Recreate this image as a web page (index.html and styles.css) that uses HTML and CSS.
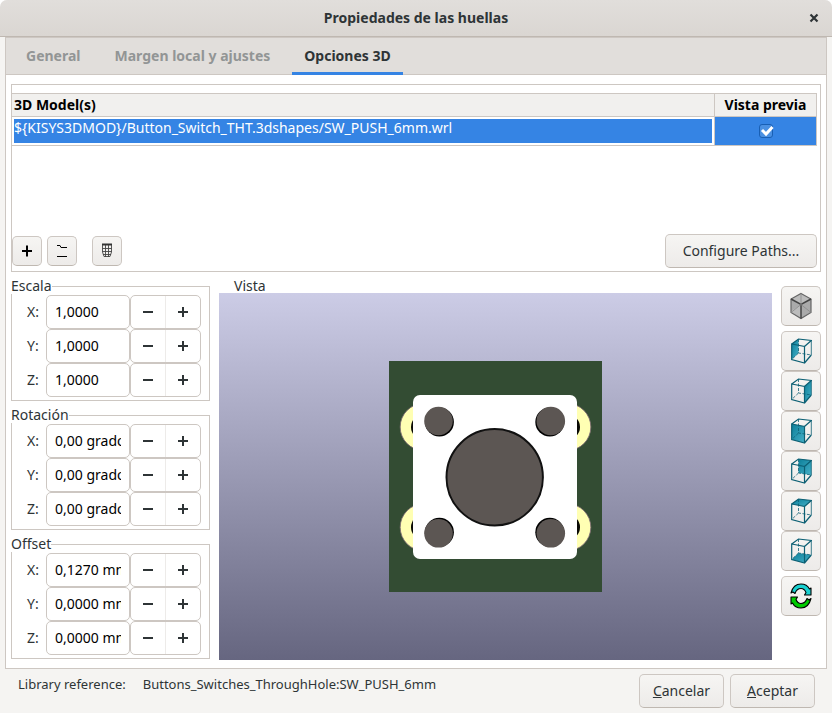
FILE: index.html
```html
<!DOCTYPE html>
<html lang="es">
<head>
<meta charset="utf-8">
<title>Propiedades de las huellas</title>
<link rel="stylesheet" href="styles.css">
</head>
<body>
<svg class="defs" aria-hidden="true">
  <defs>
    <linearGradient id="teal" x1="0" y1="0" x2="1" y2="1">
      <stop offset="0" stop-color="#0c7f99"/><stop offset="1" stop-color="#45b0c8"/>
    </linearGradient>
    <g id="wire" fill="none" stroke="#0b5f73">
      <path d="M.7 6 13.500 8.500V25L.7 21.500ZM.7 6 7.500 1 20.300 2.500 13.500 8.500M13.500 25 20.300 17" stroke-width="1.200"/>
      <path d="M20.300 2.500V17" stroke-width=".8"/>
      <path d="M7.500 1V15L20.300 17M7.500 15 .7 21.500" stroke-dasharray="3 1.500" stroke-width=".8"/>
    </g>
  </defs>
</svg>
<div class="window">
  <header class="titlebar">
    <h1>Propiedades de las huellas</h1>
    <button class="close" aria-label="Cerrar"><svg width="10" height="10" viewBox="0 0 10 10"><path d="M1.500 1.500 8.500 8.500M8.500 1.500 1.500 8.500" stroke="#2e3436" stroke-width="2.200"/></svg></button>
  </header>

  <main class="notebook">
    <nav class="tabs" role="tablist">
      <button class="tab" role="tab">General</button>
      <button class="tab" role="tab">Margen local y ajustes</button>
      <button class="tab active" role="tab" aria-selected="true">Opciones 3D</button>
    </nav>

    <div class="page">
      <section class="models">
        <table class="grid">
          <thead><tr><th>3D Model(s)</th><th class="preview">Vista previa</th></tr></thead>
          <tbody><tr>
            <td class="path"><div class="cell">${KISYS3DMOD}/Button_Switch_THT.3dshapes/SW_PUSH_6mm.wrl</div></td>
            <td class="preview"><label class="tick"><input type="checkbox" class="check" checked aria-label="Vista previa"><svg class="mark" width="14" height="12" viewBox="0 0 14 12"><path d="M2 5 6 9 12.500 2" fill="none" stroke="#fff" stroke-width="3"/></svg></label></td>
          </tr></tbody>
        </table>
        <div class="toolbar">
          <button class="btn tool" aria-label="Añadir modelo"><svg width="12" height="12" viewBox="0 0 12 12"><path d="M6 .500V11.500M1 6H11" stroke="#000" stroke-width="2"/></svg></button>
          <button class="btn tool" aria-label="Abrir carpeta"><svg width="12" height="14" viewBox="0 0 12 14"><path d="M1 1.500H4L5 3.500H11M1 12.500H11" fill="none" stroke="#000" stroke-width="1"/></svg></button>
          <button class="btn tool trash" aria-label="Eliminar modelo"><svg width="12" height="16" viewBox="0 0 12 16"><path d="M1 1.500H11" stroke="#333" stroke-width="2"/><path d="M1.500 2V9L3 13.500H9L10.500 9V2M4.500 2V14M7.500 2V14M1.500 5.500H10.500M1.500 8.500H10.500M2 11.500H10" fill="none" stroke="#444" stroke-width=".9"/></svg></button>
          <button class="btn text paths">Configure Paths...</button>
        </div>
      </section>

      <div class="columns">
        <div class="groups">
          <fieldset>
            <legend>Escala</legend>
            <div class="row"><label for="sx">X:</label><input id="sx" type="text" value="1,0000"><div class="spin"><button class="minus" aria-label="Menos"></button><button class="plus" aria-label="Más"></button></div></div>
            <div class="row"><label for="sy">Y:</label><input id="sy" type="text" value="1,0000"><div class="spin"><button class="minus" aria-label="Menos"></button><button class="plus" aria-label="Más"></button></div></div>
            <div class="row"><label for="sz">Z:</label><input id="sz" type="text" value="1,0000"><div class="spin"><button class="minus" aria-label="Menos"></button><button class="plus" aria-label="Más"></button></div></div>
          </fieldset>
          <fieldset>
            <legend>Rotación</legend>
            <div class="row"><label for="rx">X:</label><input id="rx" type="text" value="0,00 grados"><div class="spin"><button class="minus" aria-label="Menos"></button><button class="plus" aria-label="Más"></button></div></div>
            <div class="row"><label for="ry">Y:</label><input id="ry" type="text" value="0,00 grados"><div class="spin"><button class="minus" aria-label="Menos"></button><button class="plus" aria-label="Más"></button></div></div>
            <div class="row"><label for="rz">Z:</label><input id="rz" type="text" value="0,00 grados"><div class="spin"><button class="minus" aria-label="Menos"></button><button class="plus" aria-label="Más"></button></div></div>
          </fieldset>
          <fieldset>
            <legend>Offset</legend>
            <div class="row"><label for="ox">X:</label><input id="ox" type="text" value="0,1270 mm"><div class="spin"><button class="minus" aria-label="Menos"></button><button class="plus" aria-label="Más"></button></div></div>
            <div class="row"><label for="oy">Y:</label><input id="oy" type="text" value="0,0000 mm"><div class="spin"><button class="minus" aria-label="Menos"></button><button class="plus" aria-label="Más"></button></div></div>
            <div class="row"><label for="oz">Z:</label><input id="oz" type="text" value="0,0000 mm"><div class="spin"><button class="minus" aria-label="Menos"></button><button class="plus" aria-label="Más"></button></div></div>
          </fieldset>
        </div>

        <section class="view">
          <h2>Vista</h2>
          <div class="canvas">
            <svg width="213" height="231" viewBox="0 0 213 231" role="img" aria-label="Pulsador 6 mm">
              <rect width="213" height="231" fill="#334c33"/>
              <g fill="#ffffb3" stroke="#7d6a74" stroke-width=".8">
                <circle cx="34.700" cy="66" r="23.500"/><circle cx="178.300" cy="66" r="23.500"/>
                <circle cx="34.700" cy="166.300" r="23.500"/><circle cx="178.300" cy="166.300" r="23.500"/>
              </g>
              <g fill="#0a0a05">
                <circle cx="34.700" cy="66" r="12.700"/><circle cx="178.300" cy="66" r="12.700"/>
                <circle cx="34.700" cy="166.300" r="12.700"/><circle cx="178.300" cy="166.300" r="12.700"/>
              </g>
              <rect x="24" y="34" width="164" height="164" rx="7" fill="#fff"/>
              <g fill="#000">
                <circle cx="50.400" cy="60.900" r="14.500"/><circle cx="160.800" cy="60.900" r="14.500"/>
                <circle cx="50.400" cy="171.200" r="14.500"/><circle cx="160.800" cy="171.200" r="14.500"/>
              </g>
              <g fill="#5c5653">
                <circle cx="49.500" cy="60" r="14.300"/><circle cx="161.800" cy="60" r="14.300"/>
                <circle cx="49.500" cy="172.300" r="14.300"/><circle cx="161.800" cy="172.300" r="14.300"/>
              </g>
              <circle cx="105.700" cy="116.300" r="48.200" fill="#5c5653" stroke="#111" stroke-width="2"/>
            </svg>
          </div>
        </section>

        <div class="views">
          <button class="btn cube" aria-label="Vista ortográfica"><svg width="22" height="28" viewBox="0 0 22 28">
            <path d="M11 1.500 21 7V20.500L11 26.500 1 20.500V7Z" fill="#bcbcbc"/><path d="M11 13 1 19V7ZM11 13 21 7V20.500L11 26.500Z" fill="#aaa"/>
            <path d="M11 1.500 21 7V20.500L11 26.500 1 20.500V7Z" fill="none" stroke="#666" stroke-width="1.200"/><path d="M1 7 11 12.500 21 7M11 12.500V26.500" fill="none" stroke="#444" stroke-width="1.500"/><path d="M11 1.500V12.500L1 20.500M11 12.500 21 20.500" fill="none" stroke="#8a8a8a" stroke-width=".8"/></svg></button>
          <div class="stack">
            <button class="btn cube" aria-label="Vista izquierda"><svg width="21" height="26" viewBox="0 0 21 26"><path d="M.7 6 7.500 1V15L.7 21.500Z" fill="url(#teal)"/><use href="#wire"/></svg></button>
            <button class="btn cube" aria-label="Vista derecha"><svg width="21" height="26" viewBox="0 0 21 26"><path d="M13.500 8.500 20.300 2.500V17L13.500 25Z" fill="url(#teal)"/><use href="#wire"/></svg></button>
            <button class="btn cube" aria-label="Vista frontal"><svg width="21" height="26" viewBox="0 0 21 26"><path d="M.7 6 13.500 8.500V25L.7 21.500Z" fill="url(#teal)"/><use href="#wire"/></svg></button>
            <button class="btn cube" aria-label="Vista trasera"><svg width="21" height="26" viewBox="0 0 21 26"><path d="M7.500 1 20.300 2.500V17L7.500 15Z" fill="url(#teal)"/><use href="#wire"/></svg></button>
            <button class="btn cube" aria-label="Vista superior"><svg width="21" height="26" viewBox="0 0 21 26"><path d="M.7 6 7.500 1 20.300 2.500 13.500 8.500Z" fill="url(#teal)"/><use href="#wire"/></svg></button>
            <button class="btn cube" aria-label="Vista inferior"><svg width="21" height="26" viewBox="0 0 21 26"><path d="M.7 21.500 7.500 15 20.300 17 13.500 25Z" fill="url(#teal)"/><use href="#wire"/></svg></button>
          </div>
          <button class="btn cube" aria-label="Recargar"><svg width="22" height="26" viewBox="0 0 22 26" stroke="#000" stroke-width="1.100" stroke-linejoin="round">
            <path d="M1 10C2.500 4 6.500 1 11 1 15 1 18 3 19.500 6L21 5V12H14.500L16 9.500C15 7 13 5.500 11 5.500 8 5.500 6 7.500 5 10.500L3 9Z" fill="#19d0d0"/>
            <path d="M21 15.500C19.500 21.500 15.500 25 11 25 7 25 4 23 2.500 20L1 21V14L7.500 14 6 16.500C7 19 9 20.500 11 20.500 14 20.500 16 18.500 17 15.500L19 17Z" fill="#0c0"/></svg></button>
        </div>
      </div>
    </div>
  </main>

  <footer class="footer">
    <p class="ref"><span>Library reference:</span><span>Buttons_Switches_ThroughHole:SW_PUSH_6mm</span></p>
    <button class="btn text"><u>C</u>ancelar</button>
    <button class="btn text"><u>A</u>ceptar</button>
  </footer>
</div>
</body>
</html>
```
FILE: styles.css
```css
* { box-sizing: border-box; }

body {
  margin: 0;
  background: #fff;
  color: #2e3436;
  font: 14px/20px "Noto Sans", "Open Sans", sans-serif;
}

button, input { font: inherit; color: inherit; margin: 0; }
svg { display: block; }
.defs { position: absolute; width: 0; height: 0; }

.window {
  display: flex;
  flex-direction: column;
  min-height: 100vh;
  background: #f5f4f2;
  border-radius: 7px 7px 0 0;
}

.titlebar {
  display: grid;
  grid-template-columns: 36px 1fr 36px;
  align-items: center;
  height: 37px;
  background: linear-gradient(#e1dedb, #dad6d2);
  border-bottom: 1px solid #bfb8b1;
  border-radius: 7px 7px 0 0;
}
.titlebar h1 { grid-column: 2; margin: 0; font-size: 14px; font-weight: 700; text-align: center; }
.close {
  display: grid;
  place-items: center;
  height: 36px;
  padding: 0;
  border: 0;
  background: none;
}

.notebook {
  flex: 1;
  display: flex;
  flex-direction: column;
  margin: 0 5px;
  border: 1px solid #cdc7c2;
  background: #fff;
}

.tabs {
  display: flex;
  gap: 10px;
  height: 37px;
  padding: 0 8px;
  background: #e1dedb;
  border-bottom: 1px solid #cdc7c2;
}
.tab {
  height: 37px;
  padding: 2px 12px 0;
  border: 0;
  border-bottom: 3px solid transparent;
  background: none;
  color: #929595;
  font-weight: 700;
}
.tab.active { color: #2e3436; border-bottom-color: #3584e4; }

.page { flex: 1; display: flex; flex-direction: column; gap: 6px; padding: 9px 5px 8px; }

.models {
  display: flex;
  flex-direction: column;
  height: 188px;
  padding: 8px 3px 3px 0;
  border: 1px solid #cdc7c2;
}

.grid { width: 100%; border-collapse: collapse; table-layout: fixed; }
.grid th {
  height: 23px;
  padding: 0 2px;
  border: solid #cdc7c2;
  border-width: 1px 1px 1px 0;
  background: #f1f0ee;
  color: #000;
  font-weight: 700;
  text-align: left;
}
.grid .preview { width: 102px; text-align: center; }
.grid th.preview { padding: 0; }
.grid td { height: 29px; padding: 0; border: solid #cdc7c2; border-width: 1px 1px 1px 0; }
.grid td.path { padding: 2px; }
.cell { height: 24px; background: #3584e4; color: #fff; line-height: 18px; }
.grid td.preview { background: #3584e4; }

.tick { display: block; position: relative; width: 14px; margin: 0 auto; }
.check {
  appearance: none;
  display: block;
  width: 14px;
  height: 14px;
  border: 1px solid #185fb4;
  border-radius: 3px;
  background: #4a90e2;
}
.mark { position: absolute; top: 1px; left: 1px; visibility: hidden; pointer-events: none; }
.check:checked + .mark { visibility: visible; }

.btn {
  display: grid;
  place-items: center;
  padding: 0;
  border: 1px solid #cdc7c2;
  border-bottom-color: #bfb8b1;
  border-radius: 5px;
  background: linear-gradient(#f6f5f3, #edebe9);
}
.btn.text { display: block; height: 34px; min-width: 85px; padding: 0 8px; }
.btn.text.paths { margin-left: auto; min-width: 152px; }
.tool { width: 30px; height: 30px; }

.toolbar { display: flex; align-items: center; gap: 5px; margin-top: auto; }
.trash { margin-left: 10px; }

.columns { flex: 1; display: flex; gap: 9px; }

.groups { display: flex; flex-direction: column; gap: 6px; width: 199px; }
fieldset { margin: 0; padding: 1px 8px 3px 15px; border: 1px solid #cdc7c2; min-width: 0; }
legend { margin-left: -16px; padding: 0; line-height: 16px; }

.row { display: flex; height: 34px; }
.row label { width: 19px; line-height: 34px; }
.row input {
  width: 84px;
  padding: 0 8px;
  border: 1px solid #cdc7c2;
  border-radius: 5px;
  background: #fff;
  color: #000;
}
.spin {
  display: flex;
  width: 71px;
  border: 1px solid #cdc7c2;
  border-radius: 5px;
}
.spin button {
  flex: 1;
  padding: 0;
  border: 0;
  background: linear-gradient(#2e3436, #2e3436) center / 10px 2px no-repeat;
}
.spin .plus {
  border-left: 1px solid #edebe9;
  background:
    linear-gradient(#2e3436, #2e3436) center / 10px 2px no-repeat,
    linear-gradient(#2e3436, #2e3436) center / 2px 10px no-repeat;
}

.view { flex: 1; display: flex; flex-direction: column; }
.view h2 { margin: 0 15px; font-size: 14px; font-weight: 400; line-height: 15px; }
.canvas {
  flex: 1;
  display: grid;
  place-items: center;
  background: linear-gradient(#cccce6, #666680);
}

.views { display: flex; flex-direction: column; gap: 5px; padding-top: 8px; }
.stack { display: flex; flex-direction: column; }
.cube { width: 40px; height: 40px; }

.footer { display: flex; align-items: flex-start; gap: 6px; padding: 5px 17px 5px 18px; }
.ref { flex: 1; display: flex; gap: 17px; margin: 0; font-size: 13px; line-height: 20px; }
```
